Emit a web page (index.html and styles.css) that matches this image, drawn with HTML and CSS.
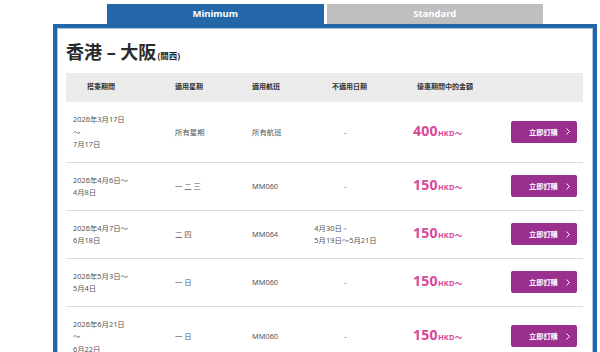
FILE: index.html
```html
<!DOCTYPE html>
<html lang="zh-Hant">
<head>
    <meta charset="UTF-8">
    <meta name="viewport" content="width=device-width, initial-scale=1.0">
    <title>香港 – 大阪(關西) 優惠</title>
    <link rel="stylesheet" href="styles.css">
</head>
<body>
    <div class="fare-wrap">
        <div class="fare-tabs">
            <div class="fare-tab active">Minimum</div>
            <div class="fare-tab">Standard</div>
        </div>

        <div class="fare-box">
            <h2 class="route-title">香港 – 大阪<span class="route-sub">(關西)</span></h2>

            <div class="fare-table">
                <div class="fare-row fare-head">
                    <div>搭乘期間</div>
                    <div>適用星期</div>
                    <div>適用航班</div>
                    <div>不適用日期</div>
                    <div>優惠期間中的金額</div>
                    <div></div>
                </div>

                <div class="fare-row">
                    <div>2026年3月17日<br>～<br>7月17日</div>
                    <div>所有星期</div>
                    <div>所有航班</div>
                    <div><div class="exclude">-</div></div>
                    <div class="price">400<span>HKD～</span></div>
                    <div><a class="book-btn" href="#">立即訂購<svg width="4" height="7" viewBox="0 0 4 7"><path d="M0.5 0.5 L3.5 3.5 L0.5 6.5" fill="none" stroke="#fff" stroke-width="1"/></svg></a></div>
                </div>

                <div class="fare-row">
                    <div>2026年4月6日～<br>4月8日</div>
                    <div>一 二 三</div>
                    <div>MM060</div>
                    <div><div class="exclude">-</div></div>
                    <div class="price">150<span>HKD～</span></div>
                    <div><a class="book-btn" href="#">立即訂購<svg width="4" height="7" viewBox="0 0 4 7"><path d="M0.5 0.5 L3.5 3.5 L0.5 6.5" fill="none" stroke="#fff" stroke-width="1"/></svg></a></div>
                </div>

                <div class="fare-row">
                    <div>2026年4月7日～<br>6月18日</div>
                    <div>二 四</div>
                    <div>MM064</div>
                    <div><div class="exclude">4月30日、<br>5月19日～5月21日</div></div>
                    <div class="price">150<span>HKD～</span></div>
                    <div><a class="book-btn" href="#">立即訂購<svg width="4" height="7" viewBox="0 0 4 7"><path d="M0.5 0.5 L3.5 3.5 L0.5 6.5" fill="none" stroke="#fff" stroke-width="1"/></svg></a></div>
                </div>

                <div class="fare-row">
                    <div>2026年5月3日～<br>5月4日</div>
                    <div>一 日</div>
                    <div>MM060</div>
                    <div><div class="exclude">-</div></div>
                    <div class="price">150<span>HKD～</span></div>
                    <div><a class="book-btn" href="#">立即訂購<svg width="4" height="7" viewBox="0 0 4 7"><path d="M0.5 0.5 L3.5 3.5 L0.5 6.5" fill="none" stroke="#fff" stroke-width="1"/></svg></a></div>
                </div>

                <div class="fare-row">
                    <div>2026年6月21日<br>～<br>6月22日</div>
                    <div>一 日</div>
                    <div>MM060</div>
                    <div><div class="exclude">-</div></div>
                    <div class="price">150<span>HKD～</span></div>
                    <div><a class="book-btn" href="#">立即訂購<svg width="4" height="7" viewBox="0 0 4 7"><path d="M0.5 0.5 L3.5 3.5 L0.5 6.5" fill="none" stroke="#fff" stroke-width="1"/></svg></a></div>
                </div>
            </div>
        </div>
    </div>
</body>
</html>
```

FILE: styles.css
```css
* {
    margin: 0;
    padding: 0;
    box-sizing: border-box;
}

html, body {
    overflow: hidden;
}

body {
    font-family: "Noto Sans", "Noto Sans CJK TC", sans-serif;
    background: #fff;
    color: #444;
}

.fare-wrap {
    width: 544px;
    margin-left: 53px;
    padding-top: 4px;
}

/* tabs */
.fare-tabs {
    display: flex;
    gap: 3px;
    width: 436px;
    margin: 0 auto;
}

.fare-tab {
    flex: 1;
    height: 20px;
    line-height: 20px;
    text-align: center;
    font-size: 9.5px;
    font-weight: 700;
    color: #fff;
    background: #bfbfbf;
}

.fare-tab.active {
    background: #2467a8;
}

/* box */
.fare-box {
    border: 4px solid #2467a8;
    border-bottom: none;
    box-shadow: inset 1px 1px 0 #a8c4e2, inset -1px 0 0 #a8c4e2;
    padding: 12px 9px 0 9px;
    min-height: 400px;
}

.route-title {
    height: 24px;
    font-size: 18px;
    font-weight: 700;
    color: #2a2a2a;
    line-height: 24px;
    margin-bottom: 9px;
    overflow: visible;
}

.route-sub {
    font-size: 8.5px;
    font-weight: 700;
    line-height: 1;
    margin-left: 1px;
}

/* table */
.fare-table {
    width: 517px;
}

.fare-row {
    display: grid;
    grid-template-columns: 94px 80px 60px 91px 114px 78px;
    align-items: center;
    border-bottom: 1px solid #dddddd;
    font-size: 7.4px;
    line-height: 12.5px;
    color: #555;
}

.fare-row > div {
    padding: 11px 0;
}

.fare-row > :nth-child(1) { padding-left: 7px; }
.fare-row > :nth-child(2) { padding-left: 15px; }
.fare-row > :nth-child(3) { padding-left: 12px; }
.fare-row > :nth-child(4) { display: flex; justify-content: center; }
.fare-row > :nth-child(5) { padding-left: 22px; }
.fare-row > :nth-child(6) { padding-left: 6px; }

.fare-head {
    height: 29px;
    background: #ebebeb;
    border-bottom: none;
    font-size: 7px;
    font-weight: 700;
    color: #333;
}

.fare-head > div {
    padding-top: 0;
    padding-bottom: 0;
}

.fare-head > :nth-child(1) { padding-left: 21px; }
.fare-head > :nth-child(4) { padding-left: 8px; }
.fare-head > :nth-child(5) { padding-left: 26px; }

.exclude {
    text-align: left;
}

.price {
    font-size: 14px;
    font-weight: 700;
    color: #d9479a;
    line-height: 12.5px;
    letter-spacing: 0.3px;
}

.price span {
    font-size: 7.5px;
    letter-spacing: 0.2px;
}

.book-btn {
    display: flex;
    align-items: center;
    width: 66px;
    height: 22px;
    padding-left: 18px;
    gap: 8px;
    background: #9b2f8e;
    border-radius: 2px;
    color: #fff;
    font-size: 7.2px;
    font-weight: 700;
    text-decoration: none;
}
```
